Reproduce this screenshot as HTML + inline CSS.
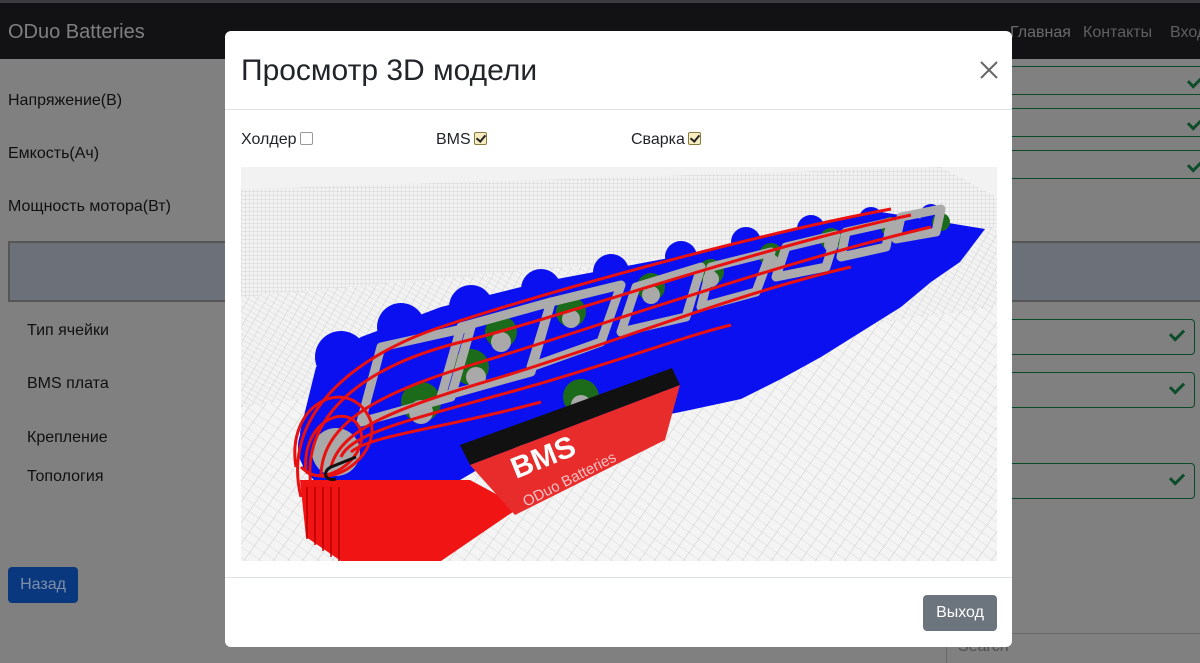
<!DOCTYPE html>
<html><head><meta charset="utf-8"><style>
*{box-sizing:border-box;margin:0;padding:0}
body{width:1200px;height:657px;overflow:hidden;background:#808080;font-family:"Liberation Sans","DejaVu Sans",sans-serif;position:relative;color:#111}
.top{position:absolute;left:0;top:0;width:1200px;height:3px;background:#3c3c40}
.nav{position:absolute;left:0;top:3px;width:1200px;height:56px;background:#121214}
.brand{position:absolute;left:8px;top:18px;font-size:20px;color:#7f7f7f}
.nl{position:absolute;top:21px;font-size:16px;color:#5f5f5f}
.lab{position:absolute;font-size:16px;color:#101010}
.inp{position:absolute;border:1px solid #0b4a26;border-radius:4px;background:#808080}
.ck{position:absolute;width:14px;height:9px;border-left:3px solid #0e4d2a;border-bottom:3px solid #0e4d2a;transform:rotate(-45deg)}
.panel{position:absolute;left:8px;top:241px;width:1200px;height:61px;background:#6c7079;border:2px solid #565656}
.btn{position:absolute;left:8px;top:567px;width:70px;height:36px;background:#0a387f;border-radius:4px;color:#7f8fa8;font-size:16px;text-align:center;line-height:36px}
.modal{position:absolute;left:225px;top:31px;width:787px;height:616px;background:#fff;border-radius:6px;overflow:hidden}
.mh{height:79px;border-bottom:1px solid #dee2e6;position:relative}
.mh h1{position:absolute;left:16px;top:23px;font-size:30px;font-weight:500;color:#212529}
.x{position:absolute;right:14px;top:30px;width:18px;height:18px}
.cb{position:absolute;top:100px;font-size:16px;color:#212529}
.box{display:inline-block;width:13px;height:13px;border:1px solid #999;border-radius:2px;vertical-align:-1px;margin-left:3px;position:relative}
.box.on{background:#f7ecc0;border-color:#8a7a40}
.box.on:after{content:"";position:absolute;left:3px;top:0px;width:4px;height:7px;border-right:2px solid #222;border-bottom:2px solid #222;transform:rotate(40deg)}
.cv{position:absolute;left:16px;top:136px;width:756px;height:394px}
.mf{position:absolute;left:0;top:546px;width:787px;border-top:1px solid #dee2e6;height:70px}
.ex{position:absolute;left:698px;top:564px;width:74px;height:36px;background:#6c757d;color:#fff;font-size:16px;border-radius:4px;text-align:center;line-height:36px}
</style></head><body>
<div class="top"></div>
<div class="nav"><div class="brand">ODuo Batteries</div>
<div class="nl" style="left:1010px;color:#6a6a6a">Главная</div><div class="nl" style="left:1083px">Контакты</div><div class="nl" style="left:1170px">Вход</div></div>
<div class="lab" style="left:8px;top:92px">Напряжение(В)</div>
<div class="lab" style="left:8px;top:145px">Емкость(Ач)</div>
<div class="lab" style="left:8px;top:198px">Мощность мотора(Вт)</div>
<div class="inp" style="left:990px;top:66px;width:230px;height:29px"></div><div class="ck" style="left:1188px;top:76px"></div>
<div class="inp" style="left:990px;top:108px;width:230px;height:29px"></div><div class="ck" style="left:1188px;top:118px"></div>
<div class="inp" style="left:990px;top:150px;width:230px;height:29px"></div><div class="ck" style="left:1188px;top:160px"></div>
<div class="panel"></div>
<div class="lab" style="left:27px;top:322px">Тип ячейки</div>
<div class="lab" style="left:27px;top:375px">BMS плата</div>
<div class="lab" style="left:27px;top:429px">Крепление</div>
<div class="lab" style="left:27px;top:468px">Топология</div>
<div class="inp" style="left:990px;top:319px;width:205px;height:36px"></div><div class="ck" style="left:1170px;top:329px"></div>
<div class="inp" style="left:990px;top:372px;width:205px;height:36px"></div><div class="ck" style="left:1170px;top:382px"></div>
<div class="inp" style="left:990px;top:463px;width:205px;height:36px"></div><div class="ck" style="left:1170px;top:473px"></div>
<div style="position:absolute;left:946px;top:633px;width:260px;height:30px;border-top:1px solid #6a6a6a;border-left:1px solid #6a6a6a"></div>
<div class="lab" style="left:958px;top:638px;color:#505050">Search</div>
<div class="btn">Назад</div>
<div class="modal">
<div class="mh"><h1>Просмотр 3D модели</h1>
<svg class="x" viewBox="0 0 18 18"><path d="M1 1L17 17M17 1L1 17" stroke="#666" stroke-width="2"/></svg></div>
<div class="cb" style="left:16px">Холдер<span class="box"></span></div>
<div class="cb" style="left:211px">BMS<span class="box on"></span></div>
<div class="cb" style="left:406px">Сварка<span class="box on"></span></div>
<svg class="cv" viewBox="0 0 756 394">
<defs>
<pattern id="g1" width="4" height="4" patternUnits="userSpaceOnUse"><path d="M0 0H4M0 0V4" stroke="#bbb" stroke-width="0.5"/></pattern>
<pattern id="g2" width="12" height="12" patternUnits="userSpaceOnUse" patternTransform="rotate(35) scale(1,0.7)"><path d="M0 0H12M0 0V12" stroke="#c2c2c2" stroke-width="0.8"/></pattern>
<pattern id="g3" width="8" height="8" patternUnits="userSpaceOnUse" patternTransform="rotate(30) scale(1,0.6)"><path d="M0 0H8M0 0V8" stroke="#c0c0c0" stroke-width="0.6"/></pattern>
</defs>
<rect width="756" height="394" fill="#f2f2f2"/>
<polygon points="0,22 700,0 756,30 756,394 0,394" fill="url(#g1)"/>
<polygon points="0,130 756,60 756,394 0,394" fill="#f2f2f2"/>
<polygon points="0,130 756,60 756,394 0,394" fill="url(#g3)"/>
<polygon points="0,240 756,140 756,394 0,394" fill="#f4f4f4"/>
<polygon points="0,240 756,140 756,394 0,394" fill="url(#g2)"/>
<polygon points="59,265 75,200 120,170 200,140 300,115 380,100 460,85 560,60 640,45 744,62 719,95 690,115 660,140 620,165 580,190 540,212 500,232 449,243 279,278 219,313 89,333 62,300" fill="#0a10f0"/>
<g fill="#0a10f0"><circle cx="100" cy="190" r="26"/><circle cx="160" cy="160" r="24"/><circle cx="230" cy="140" r="22"/><circle cx="300" cy="122" r="20"/><circle cx="370" cy="105" r="18"/><circle cx="440" cy="90" r="16"/><circle cx="505" cy="75" r="15"/><circle cx="570" cy="62" r="14"/><circle cx="630" cy="52" r="12"/><circle cx="690" cy="48" r="11"/><circle cx="95" cy="280" r="38"/></g>
<g fill="#1b6b1b"><circle cx="180" cy="235" r="20"/><circle cx="230" cy="200" r="18"/><circle cx="260" cy="165" r="16"/><circle cx="330" cy="145" r="15"/><circle cx="410" cy="120" r="14"/><circle cx="470" cy="105" r="13"/><circle cx="530" cy="88" r="12"/><circle cx="590" cy="72" r="11"/><circle cx="650" cy="60" r="10"/><circle cx="700" cy="55" r="9"/><circle cx="340" cy="230" r="18"/></g>
<g fill="#a9a9a9"><circle cx="95" cy="285" r="24"/><circle cx="180" cy="245" r="12"/><circle cx="235" cy="210" r="10"/><circle cx="260" cy="175" r="10"/><circle cx="330" cy="152" r="9"/><circle cx="410" cy="128" r="9"/><circle cx="470" cy="112" r="8"/><circle cx="530" cy="95" r="8"/><circle cx="590" cy="78" r="7"/><circle cx="650" cy="66" r="7"/><circle cx="340" cy="238" r="10"/></g>
<g fill="none" stroke="#ababab" stroke-width="9" stroke-linejoin="round"><path d="M120 255L140 180L230 160L210 230Z"/><path d="M200 230L220 160L310 135L290 205Z"/><path d="M290 200L310 135L380 118L360 175Z"/><path d="M380 165L395 120L460 100L445 150Z"/><path d="M460 140L470 100L530 85L515 125Z"/><path d="M535 110L545 80L595 68L585 100Z"/><path d="M600 90L605 65L650 55L645 80Z"/><path d="M655 72L660 50L700 42L695 65Z"/></g>
<g fill="none" stroke="#e81010" stroke-width="3"><path d="M60 330C40 250 110 190 200 160S500 70 650 42"/><path d="M70 320C60 250 120 200 220 175S520 80 670 48"/><path d="M80 310C80 255 140 225 240 195S540 95 690 60"/><path d="M90 300C100 260 160 240 260 210S500 125 610 100"/><path d="M100 290C110 265 180 250 280 222S440 170 490 158"/><path d="M110 285C130 268 200 262 300 235"/><path d="M55 300C45 240 100 210 125 245S90 330 60 300"/><path d="M65 305C60 255 105 235 118 260S90 320 65 305"/></g>
<polygon points="59,313 229,313 279,340 200,394 100,394 65,370" fill="#f01414"/>
<g stroke="#b00" stroke-width="1.5"><path d="M66 320V372M74 320V378M82 320V384M90 320V390M98 320V394"/></g>
<path d="M115 290L90 300C80 305 85 315 95 312" stroke="#111" stroke-width="3" fill="none"/>
<polygon points="219,278 431,201 439,218 229,298" fill="#111"/>
<polygon points="229,298 439,218 424,273 274,348" fill="#e82c2c"/>
<text x="0" y="0" transform="translate(275,312) rotate(-22)" fill="#fff" font-size="30" font-weight="bold" font-family="Liberation Sans,sans-serif">BMS</text>
<text x="0" y="0" transform="translate(285,340) rotate(-27)" fill="#f4c0c0" font-size="15" font-family="Liberation Sans,sans-serif">ODuo Batteries</text>
</svg>
<div class="mf"></div>
<div class="ex">Выход</div>
</div>
</body></html>
